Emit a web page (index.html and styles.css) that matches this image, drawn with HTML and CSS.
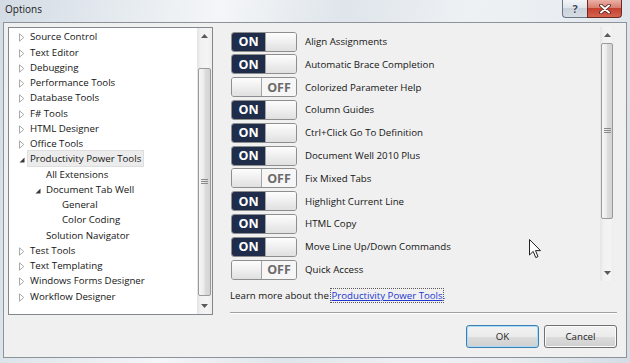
FILE: index.html
```html
<!DOCTYPE html>
<html>
<head>
<meta charset="utf-8">
<title>Options</title>
<link rel="stylesheet" href="styles.css">
</head>
<body>
<div class="window">
  <div class="titlebar">
    <span class="title">Options</span>
    <div class="caption-btns">
      <div class="cbtn help">?</div>
      <div class="cbtn close">
        <svg width="14" height="10" viewBox="0 0 14 10"><path d="M3 1.5 L11 8.5 M11 1.5 L3 8.5" stroke="#4a1a14" stroke-width="3.6" stroke-linecap="round"/><path d="M3 1.5 L11 8.5 M11 1.5 L3 8.5" stroke="#ffffff" stroke-width="2" stroke-linecap="round"/></svg>
      </div>
    </div>
  </div>
  <div class="client">
    <div class="main">
      <div class="tree">
        <ul class="tree-list">
          <li class="ti l1"><span class="ex col"><svg width="6" height="9" viewBox="0 0 6 9"><path d="M0.5 0.8 L4.8 4.5 L0.5 8.2 Z" fill="#fff" stroke="#a9a9a9" stroke-width="1"/></svg></span><span class="tt">Source Control</span></li>
          <li class="ti l1"><span class="ex col"><svg width="6" height="9" viewBox="0 0 6 9"><path d="M0.5 0.8 L4.8 4.5 L0.5 8.2 Z" fill="#fff" stroke="#a9a9a9" stroke-width="1"/></svg></span><span class="tt">Text Editor</span></li>
          <li class="ti l1"><span class="ex col"><svg width="6" height="9" viewBox="0 0 6 9"><path d="M0.5 0.8 L4.8 4.5 L0.5 8.2 Z" fill="#fff" stroke="#a9a9a9" stroke-width="1"/></svg></span><span class="tt">Debugging</span></li>
          <li class="ti l1"><span class="ex col"><svg width="6" height="9" viewBox="0 0 6 9"><path d="M0.5 0.8 L4.8 4.5 L0.5 8.2 Z" fill="#fff" stroke="#a9a9a9" stroke-width="1"/></svg></span><span class="tt">Performance Tools</span></li>
          <li class="ti l1"><span class="ex col"><svg width="6" height="9" viewBox="0 0 6 9"><path d="M0.5 0.8 L4.8 4.5 L0.5 8.2 Z" fill="#fff" stroke="#a9a9a9" stroke-width="1"/></svg></span><span class="tt">Database Tools</span></li>
          <li class="ti l1"><span class="ex col"><svg width="6" height="9" viewBox="0 0 6 9"><path d="M0.5 0.8 L4.8 4.5 L0.5 8.2 Z" fill="#fff" stroke="#a9a9a9" stroke-width="1"/></svg></span><span class="tt">F# Tools</span></li>
          <li class="ti l1"><span class="ex col"><svg width="6" height="9" viewBox="0 0 6 9"><path d="M0.5 0.8 L4.8 4.5 L0.5 8.2 Z" fill="#fff" stroke="#a9a9a9" stroke-width="1"/></svg></span><span class="tt">HTML Designer</span></li>
          <li class="ti l1"><span class="ex col"><svg width="6" height="9" viewBox="0 0 6 9"><path d="M0.5 0.8 L4.8 4.5 L0.5 8.2 Z" fill="#fff" stroke="#a9a9a9" stroke-width="1"/></svg></span><span class="tt">Office Tools</span></li>
          <li class="ti l1"><span class="ex"><svg width="6" height="6" viewBox="0 0 6 6"><path d="M5.5 0.5 L5.5 5.5 L0.5 5.5 Z" fill="#3a3a3a"/></svg></span><span class="tt sel">Productivity Power Tools</span></li>
          <li class="ti l2"><span class="ex"></span><span class="tt">All Extensions</span></li>
          <li class="ti l2"><span class="ex"><svg width="6" height="6" viewBox="0 0 6 6"><path d="M5.5 0.5 L5.5 5.5 L0.5 5.5 Z" fill="#3a3a3a"/></svg></span><span class="tt">Document Tab Well</span></li>
          <li class="ti l3"><span class="ex"></span><span class="tt">General</span></li>
          <li class="ti l3"><span class="ex"></span><span class="tt">Color Coding</span></li>
          <li class="ti l2"><span class="ex"></span><span class="tt">Solution Navigator</span></li>
          <li class="ti l1"><span class="ex col"><svg width="6" height="9" viewBox="0 0 6 9"><path d="M0.5 0.8 L4.8 4.5 L0.5 8.2 Z" fill="#fff" stroke="#a9a9a9" stroke-width="1"/></svg></span><span class="tt">Test Tools</span></li>
          <li class="ti l1"><span class="ex col"><svg width="6" height="9" viewBox="0 0 6 9"><path d="M0.5 0.8 L4.8 4.5 L0.5 8.2 Z" fill="#fff" stroke="#a9a9a9" stroke-width="1"/></svg></span><span class="tt">Text Templating</span></li>
          <li class="ti l1"><span class="ex col"><svg width="6" height="9" viewBox="0 0 6 9"><path d="M0.5 0.8 L4.8 4.5 L0.5 8.2 Z" fill="#fff" stroke="#a9a9a9" stroke-width="1"/></svg></span><span class="tt">Windows Forms Designer</span></li>
          <li class="ti l1"><span class="ex col"><svg width="6" height="9" viewBox="0 0 6 9"><path d="M0.5 0.8 L4.8 4.5 L0.5 8.2 Z" fill="#fff" stroke="#a9a9a9" stroke-width="1"/></svg></span><span class="tt">Workflow Designer</span></li>
        </ul>
        <div class="vscroll tree-sb">
          <div class="sb-btn"><svg width="7" height="4" viewBox="0 0 7 4"><path d="M3.5 0 L7 4 L0 4 Z" fill="#5a5a5a"/></svg></div>
          <div class="sb-track">
            <div class="thumb tree-thumb"><svg width="7" height="6" viewBox="0 0 7 6"><path d="M0 0.5 H7 M0 2.5 H7 M0 4.5 H7" stroke="#8a8a8a" stroke-width="1"/></svg></div>
          </div>
          <div class="sb-btn"><svg width="7" height="4" viewBox="0 0 7 4"><path d="M0 0 L7 0 L3.5 4 Z" fill="#5a5a5a"/></svg></div>
        </div>
      </div>
      <div class="right">
        <div class="opts">
          <ul class="opt-list">
            <li class="opt"><span class="toggle on"><span class="lbl">ON</span><span class="knob"></span></span><span class="opt-text">Align Assignments</span></li>
            <li class="opt"><span class="toggle on"><span class="lbl">ON</span><span class="knob"></span></span><span class="opt-text">Automatic Brace Completion</span></li>
            <li class="opt"><span class="toggle off"><span class="knob"></span><span class="lbl">OFF</span></span><span class="opt-text">Colorized Parameter Help</span></li>
            <li class="opt"><span class="toggle on"><span class="lbl">ON</span><span class="knob"></span></span><span class="opt-text">Column Guides</span></li>
            <li class="opt"><span class="toggle on"><span class="lbl">ON</span><span class="knob"></span></span><span class="opt-text">Ctrl+Click Go To Definition</span></li>
            <li class="opt"><span class="toggle on"><span class="lbl">ON</span><span class="knob"></span></span><span class="opt-text">Document Well 2010 Plus</span></li>
            <li class="opt"><span class="toggle off"><span class="knob"></span><span class="lbl">OFF</span></span><span class="opt-text">Fix Mixed Tabs</span></li>
            <li class="opt"><span class="toggle on"><span class="lbl">ON</span><span class="knob"></span></span><span class="opt-text">Highlight Current Line</span></li>
            <li class="opt"><span class="toggle on"><span class="lbl">ON</span><span class="knob"></span></span><span class="opt-text">HTML Copy</span></li>
            <li class="opt"><span class="toggle on"><span class="lbl">ON</span><span class="knob"></span></span><span class="opt-text">Move Line Up/Down Commands</span></li>
            <li class="opt"><span class="toggle off"><span class="knob"></span><span class="lbl">OFF</span></span><span class="opt-text">Quick Access</span></li>
          </ul>
          <div class="vscroll opt-sb">
            <div class="sb-btn"><svg width="7" height="4" viewBox="0 0 7 4"><path d="M3.5 0 L7 4 L0 4 Z" fill="#5a5a5a"/></svg></div>
            <div class="sb-track">
              <div class="thumb opt-thumb"><svg width="7" height="6" viewBox="0 0 7 6"><path d="M0 0.5 H7 M0 2.5 H7 M0 4.5 H7" stroke="#8a8a8a" stroke-width="1"/></svg></div>
            </div>
            <div class="sb-btn"><svg width="7" height="4" viewBox="0 0 7 4"><path d="M0 0 L7 0 L3.5 4 Z" fill="#5a5a5a"/></svg></div>
          </div>
        </div>
        <p class="learn">Learn more about the <a href="#" class="link">Productivity Power Tools</a>.</p>
        <div class="sep"></div>
      </div>
    </div>
    <div class="buttons">
      <button class="btn default">OK</button>
      <button class="btn">Cancel</button>
    </div>
  </div>
</div>
<svg class="cursor" width="13" height="20" viewBox="0 0 13 20"><path d="M0.5 0.5 L0.5 16 L4.2 12.4 L6.8 18.6 L9 17.6 L6.5 11.6 L11.5 11.6 Z" fill="#ffffff" stroke="#222" stroke-width="1" stroke-linejoin="round"/></svg>
</body>
</html>
```

FILE: styles.css
```css
* { box-sizing: border-box; }
html, body { margin: 0; padding: 0; }
body {
  width: 630px;
  height: 363px;
  overflow: hidden;
  position: relative;
  font-family: "Open Sans", "Noto Sans", sans-serif;
  font-size: 9.7px;
  color: #141414;
}
.window {
  width: 630px;
  height: 363px;
  display: flex;
  flex-direction: column;
  background: linear-gradient(100deg, #d3dbe4 0%, #e6ebf0 18%, #f4f6f8 32%, #dfe5eb 50%, #eef1f4 68%, #e9edf1 82%, #d5dce4 100%);
}
.titlebar {
  height: 22px;
  flex: none;
  display: flex;
  align-items: flex-start;
}
.title {
  margin: 1px 0 0 5px;
  font-size: 10px;
  line-height: 16px;
  color: #1a1a1a;
}
.caption-btns {
  margin-left: auto;
  margin-right: 8px;
  display: flex;
}
.cbtn {
  height: 18px;
  display: flex;
  align-items: center;
  justify-content: center;
  border: 1px solid #6a7686;
  border-top: none;
}
.help {
  width: 25px;
  border-right: none;
  border-radius: 0 0 0 4px;
  background: linear-gradient(#f3f5f8, #e0e5eb 45%, #c9d1db 50%, #d6dce4);
  font-weight: 700;
  font-size: 11px;
  color: #3d4b5e;
  text-shadow: 0 0 2px #fff;
}
.close {
  width: 35px;
  border-color: #6e2a22;
  border-radius: 0 0 4px 0;
  background: linear-gradient(#eab0a6, #d8806f 45%, #c4412f 50%, #d4644f);
}

.client {
  flex: none;
  height: 336px;
  margin: 0 3px;
  border: 1px solid #8c939b;
  background: #f0f0f0;
  padding: 4px 9px 0 4px;
  display: flex;
  flex-direction: column;
}
.main {
  display: flex;
  height: 288px;
  flex: none;
}

/* tree */
.tree {
  width: 205px;
  height: 288px;
  border: 1px solid #828790;
  background: #fff;
  display: flex;
}
.tree-list {
  flex: 1;
  list-style: none;
  margin: 0;
  padding: 1.2px 0 0 0;
}
.ti {
  height: 15.25px;
  display: flex;
  align-items: center;
  white-space: nowrap;
}
.ti.l1 { padding-left: 10px; }
.ti.l2 { padding-left: 26px; }
.ti.l3 { padding-left: 42px; }
.ex {
  width: 11px;
  height: 15px;
  flex: none;
  display: flex;
  align-items: center;
  padding-top: 3px;
}
.ex.col { padding-top: 2px; }
.tt {
  line-height: 15px;
}
.tt.sel {
  margin-left: -2px;
  padding: 0 2px;
  background: #ececec;
  outline: 1px solid #dedede;
}

/* scrollbars */
.vscroll {
  display: flex;
  flex-direction: column;
  background: linear-gradient(to right, #e4e4e4, #f1f1f1 25%, #f4f4f4 70%, #ededed);
}
.tree-sb { width: 15px; }
.opt-sb { width: 14px; margin-right: 3px; height: 254px; }
.sb-btn {
  height: 16px;
  flex: none;
  display: flex;
  align-items: center;
  justify-content: center;
}
.sb-track {
  flex: 1;
  display: flex;
  flex-direction: column;
  padding: 0 1px;
}
.thumb {
  border: 1px solid #9a9a9a;
  border-radius: 2px;
  background: linear-gradient(to right, #f6f6f6, #ebebeb 45%, #dcdcdc 55%, #d3d3d3);
  display: flex;
  align-items: center;
  justify-content: center;
}
.tree-thumb { margin-top: 24px; height: 228px; }
.opt-thumb { margin-top: 0; height: 176px; }

/* right side */
.right {
  margin-left: 16px;
  width: 388px;
  display: flex;
  flex-direction: column;
}
.opts {
  display: flex;
  height: 254px;
  flex: none;
}
.opt-list {
  flex: 1;
  list-style: none;
  margin: 0;
  padding: 3.2px 0 0 0;
}
.opt {
  height: 22.8px;
  display: flex;
  align-items: center;
  white-space: nowrap;
}
.toggle {
  width: 66px;
  height: 20px;
  margin-left: 2px;
  border: 1px solid #8e8e8e;
  border-radius: 3px;
  display: flex;
  overflow: hidden;
  flex: none;
}
.toggle .lbl {
  display: flex;
  align-items: center;
  justify-content: center;
  font-weight: 700;
  font-size: 12.5px;
}
.toggle.on .lbl {
  width: 33px;
  background: #1f2d4b;
  color: #ffffff;
}
.toggle.off .lbl {
  width: 34px;
  background: #f6f6f6;
  color: #6b6b6b;
}
.toggle .knob {
  flex: 1;
  background: linear-gradient(#fdfdfd, #efefef 50%, #e0e0e0);
}
.toggle.on .knob { border-left: 1px solid #a3a3a3; }
.toggle.off .knob { border-right: 1px solid #a3a3a3; }
.opt-text {
  margin-left: 8px;
}

.learn {
  margin: 7px 0 0 1px;
  line-height: 16px;
}
.link {
  color: #2236d2;
  text-decoration: underline;
  outline: 1px dotted #5a5a5a;
}
.sep {
  margin: 8px 0 0 1px;
  height: 1px;
  width: 387px;
  background: #a0a0a0;
  box-shadow: 0 1px 0 #ffffff;
}

.buttons {
  display: flex;
  justify-content: flex-end;
  gap: 5px;
  margin-top: 10px;
}
.btn {
  width: 73px;
  height: 23px;
  padding: 0;
  border: 1px solid #707070;
  border-radius: 3px;
  background: linear-gradient(#f2f2f2 0%, #ebebeb 50%, #dddddd 51%, #cfcfcf 100%);
  box-shadow: inset 0 0 0 1px #fbfbfb;
  font-family: inherit;
  font-size: 9.7px;
  color: #1e1e1e;
}
.btn.default {
  border-color: #3c7fb1;
  box-shadow: inset 0 0 0 1px #a9dcf6;
}

.cursor {
  position: absolute;
  left: 529px;
  top: 239px;
}
```
